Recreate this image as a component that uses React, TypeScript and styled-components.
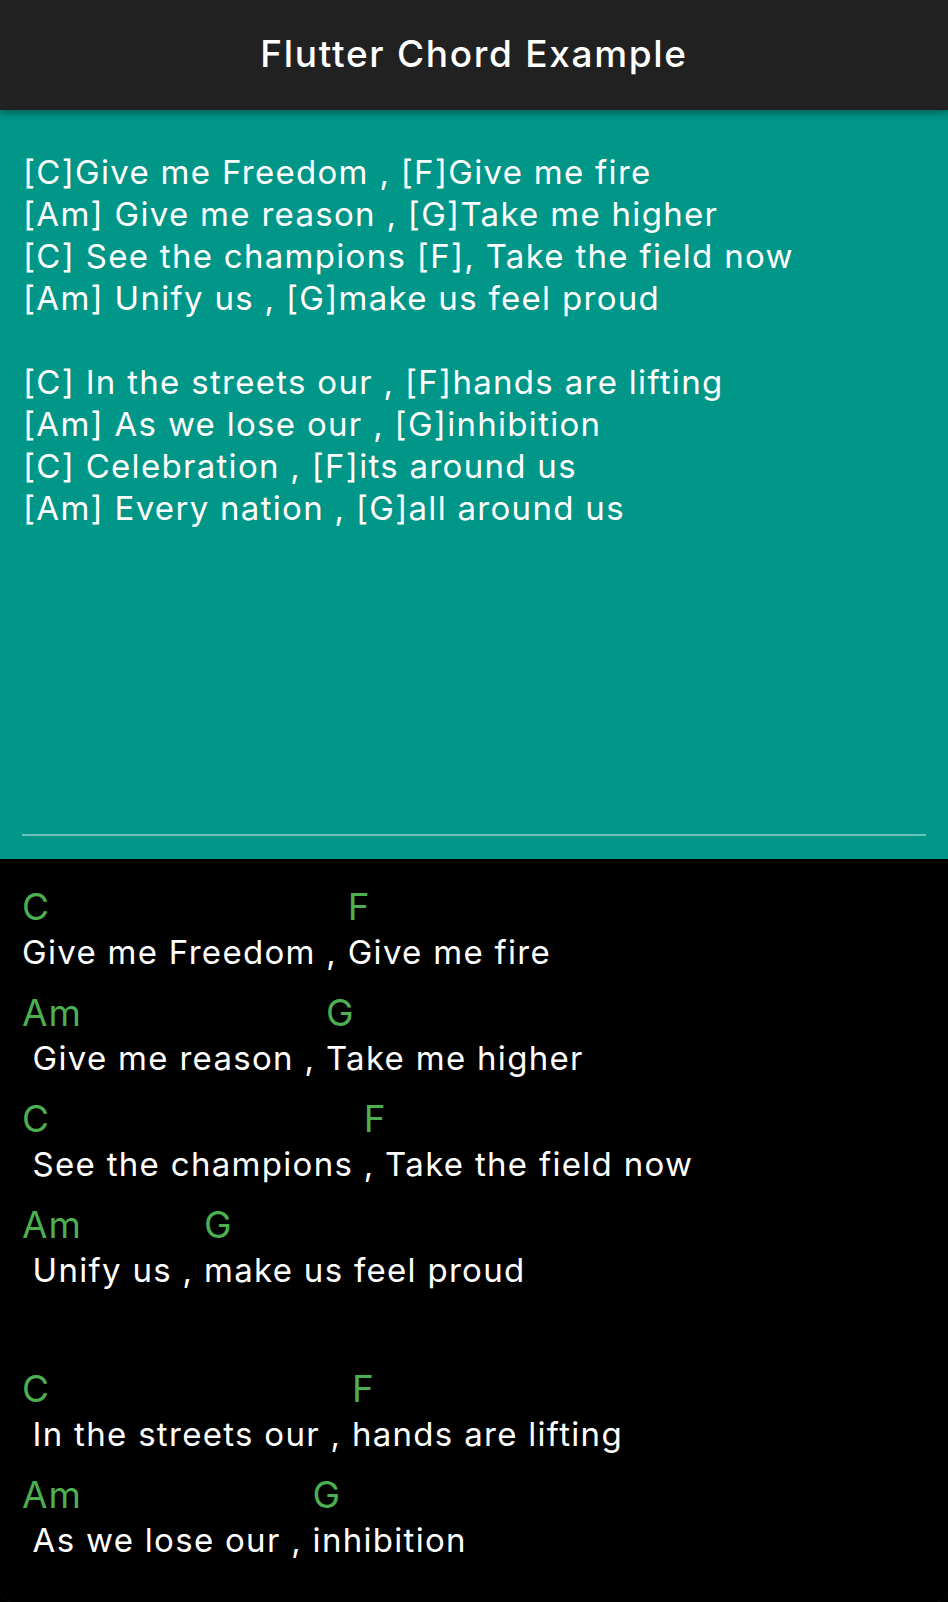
import React from "react";
import styled, { createGlobalStyle } from "styled-components";

const GlobalStyle = createGlobalStyle`
  html, body {
    margin: 0;
    padding: 0;
    background: #000;
  }
  body {
    font-family: Inter, "Noto Sans", sans-serif;
    -webkit-font-smoothing: antialiased;
  }
`;

const Frame = styled.div`
  width: 948px;
  height: 1602px;
  display: flex;
  flex-direction: column;
  overflow: hidden;
  background: #000;
  border-radius: 0 0 12px 12px;
  box-shadow: inset 0 0 0 1px rgba(120, 120, 120, 0.25);
`;

const AppBar = styled.header`
  position: relative;
  z-index: 1;
  height: 110px;
  flex: 0 0 auto;
  display: flex;
  align-items: center;
  justify-content: center;
  background: #212121;
  box-shadow: 0 2px 8px rgba(0, 0, 0, 0.45);
`;

const Title = styled.h1`
  margin: 0 0 4px;
  color: #fff;
  font-family: Inter, sans-serif;
  font-size: 37px;
  font-weight: 500;
  letter-spacing: 1.7px;
`;

const EditorPanel = styled.section`
  flex: 0 0 auto;
  background: #009688;
  padding: 41px 22px 23px;
`;

const Editor = styled.div`
  height: 683px;
  border-bottom: 2px solid rgba(255, 255, 255, 0.42);
  color: #fff;
  font-size: 33px;
  line-height: 42px;
  letter-spacing: 1.3px;
  white-space: pre;
  padding-left: 1px;
`;

const ChordPanel = styled.section`
  flex: 1 1 auto;
  min-height: 0;
  display: flex;
  flex-direction: column;
  background: #000;
  padding: 26px 22px 36px;
`;

const ChordList = styled.div`
  flex: 1 1 auto;
  min-height: 0;
  overflow-y: auto;
  scrollbar-width: none;
  &::-webkit-scrollbar {
    display: none;
  }
`;

const LyricLine = styled.div`
  display: flex;
  align-items: flex-start;
  margin-bottom: 18px;
`;

const EmptyLine = styled.div`
  height: 58px;
`;

const Segment = styled.div`
  display: flex;
  flex-direction: column;
`;

const Chord = styled.span`
  color: #4caf50;
  font-size: 37px;
  line-height: 44px;
  height: 44px;
  letter-spacing: 1px;
  white-space: pre;
`;

const Lyric = styled.span`
  color: #fff;
  font-size: 33px;
  line-height: 42px;
  margin-top: 2px;
  letter-spacing: 1.3px;
  white-space: pre;
`;

const SOURCE = `[C]Give me Freedom , [F]Give me fire
[Am] Give me reason , [G]Take me higher
[C] See the champions [F], Take the field now
[Am] Unify us , [G]make us feel proud

[C] In the streets our , [F]hands are lifting
[Am] As we lose our , [G]inhibition
[C] Celebration , [F]its around us
[Am] Every nation , [G]all around us`;

type Part = { chord: string; text: string };

function parseLine(line: string): Part[] {
  const parts: Part[] = [];
  const re = /\[([^\]]+)\]([^\[]*)/g;
  let m: RegExpExecArray | null;
  while ((m = re.exec(line)) !== null) {
    parts.push({ chord: m[1], text: m[2] });
  }
  return parts;
}

export default function App() {
  const lines = SOURCE.split("\n");
  return (
    <>
      <GlobalStyle />
      <Frame>
        <AppBar>
          <Title>Flutter Chord Example</Title>
        </AppBar>
        <EditorPanel>
          <Editor>{SOURCE}</Editor>
        </EditorPanel>
        <ChordPanel>
          <ChordList>
            {lines.map((line, i) =>
              line.trim() === "" ? (
                <EmptyLine key={i} />
              ) : (
                <LyricLine key={i}>
                  {parseLine(line).map((p, j) => (
                    <Segment key={j}>
                      <Chord>{p.chord}</Chord>
                      <Lyric>{p.text}</Lyric>
                    </Segment>
                  ))}
                </LyricLine>
              )
            )}
          </ChordList>
        </ChordPanel>
      </Frame>
    </>
  );
}
